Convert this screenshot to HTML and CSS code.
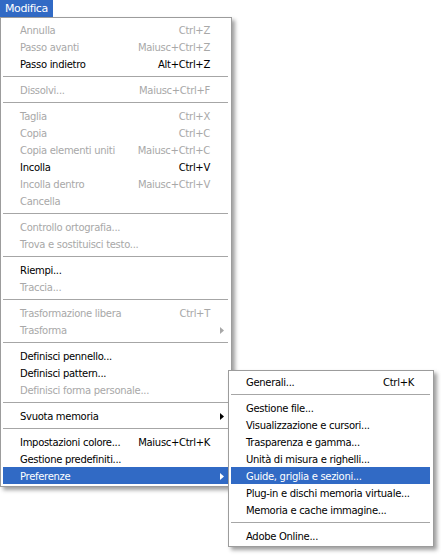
FILE: index.html
```html
<!DOCTYPE html>
<html lang="it">
<head>
<meta charset="utf-8">
<title>Modifica</title>
<link rel="stylesheet" href="styles.css">
</head>
<body>
<div class="screen">
  <div class="menubar-item">Modifica</div>
  <div class="menu main">
    <div class="item off"><span class="label">Annulla</span><span class="key">Ctrl+Z</span><span class="sub"></span></div>
    <div class="item off"><span class="label">Passo avanti</span><span class="key">Maiusc+Ctrl+Z</span><span class="sub"></span></div>
    <div class="item"><span class="label">Passo indietro</span><span class="key">Alt+Ctrl+Z</span><span class="sub"></span></div>
    <div class="sep"></div>
    <div class="item off"><span class="label">Dissolvi...</span><span class="key">Maiusc+Ctrl+F</span><span class="sub"></span></div>
    <div class="sep"></div>
    <div class="item off"><span class="label">Taglia</span><span class="key">Ctrl+X</span><span class="sub"></span></div>
    <div class="item off"><span class="label">Copia</span><span class="key">Ctrl+C</span><span class="sub"></span></div>
    <div class="item off"><span class="label">Copia elementi uniti</span><span class="key">Maiusc+Ctrl+C</span><span class="sub"></span></div>
    <div class="item"><span class="label">Incolla</span><span class="key">Ctrl+V</span><span class="sub"></span></div>
    <div class="item off"><span class="label">Incolla dentro</span><span class="key">Maiusc+Ctrl+V</span><span class="sub"></span></div>
    <div class="item off"><span class="label">Cancella</span><span class="key"></span><span class="sub"></span></div>
    <div class="sep"></div>
    <div class="item off"><span class="label">Controllo ortografia...</span><span class="key"></span><span class="sub"></span></div>
    <div class="item off"><span class="label">Trova e sostituisci testo...</span><span class="key"></span><span class="sub"></span></div>
    <div class="sep"></div>
    <div class="item"><span class="label">Riempi...</span><span class="key"></span><span class="sub"></span></div>
    <div class="item off"><span class="label">Traccia...</span><span class="key"></span><span class="sub"></span></div>
    <div class="sep"></div>
    <div class="item off"><span class="label">Trasformazione libera</span><span class="key">Ctrl+T</span><span class="sub"></span></div>
    <div class="item off"><span class="label">Trasforma</span><span class="key"></span><span class="sub"><svg class="arrow" width="4" height="7" viewBox="0 0 4 7"><path d="M0 0L4 3.5L0 7Z"/></svg></span></div>
    <div class="sep"></div>
    <div class="item"><span class="label">Definisci pennello...</span><span class="key"></span><span class="sub"></span></div>
    <div class="item"><span class="label">Definisci pattern...</span><span class="key"></span><span class="sub"></span></div>
    <div class="item off"><span class="label">Definisci forma personale...</span><span class="key"></span><span class="sub"></span></div>
    <div class="sep"></div>
    <div class="item"><span class="label">Svuota memoria</span><span class="key"></span><span class="sub"><svg class="arrow" width="4" height="7" viewBox="0 0 4 7"><path d="M0 0L4 3.5L0 7Z"/></svg></span></div>
    <div class="sep"></div>
    <div class="item"><span class="label">Impostazioni colore...</span><span class="key">Maiusc+Ctrl+K</span><span class="sub"></span></div>
    <div class="item"><span class="label">Gestione predefiniti...</span><span class="key"></span><span class="sub"></span></div>
    <div class="item hi"><span class="label">Preferenze</span><span class="key"></span><span class="sub"><svg class="arrow" width="4" height="7" viewBox="0 0 4 7"><path d="M0 0L4 3.5L0 7Z"/></svg></span></div>
  </div>
  <div class="menu submenu">
    <div class="item"><span class="label">Generali...</span><span class="key">Ctrl+K</span><span class="sub"></span></div>
    <div class="sep"></div>
    <div class="item"><span class="label">Gestione file...</span><span class="key"></span><span class="sub"></span></div>
    <div class="item"><span class="label">Visualizzazione e cursori...</span><span class="key"></span><span class="sub"></span></div>
    <div class="item"><span class="label">Trasparenza e gamma...</span><span class="key"></span><span class="sub"></span></div>
    <div class="item"><span class="label">Unità di misura e righelli...</span><span class="key"></span><span class="sub"></span></div>
    <div class="item hi"><span class="label">Guide, griglia e sezioni...</span><span class="key"></span><span class="sub"></span></div>
    <div class="item"><span class="label">Plug-in e dischi memoria virtuale...</span><span class="key"></span><span class="sub"></span></div>
    <div class="item"><span class="label">Memoria e cache immagine...</span><span class="key"></span><span class="sub"></span></div>
    <div class="sep"></div>
    <div class="item"><span class="label">Adobe Online...</span><span class="key"></span><span class="sub"></span></div>
  </div>
</div>
</body>
</html>
```

FILE: styles.css
```css
html, body {
  margin: 0;
  padding: 0;
  background: #ffffff;
}

body {
  font-family: "DejaVu Sans", Verdana, sans-serif;
  font-size: 10px;
  letter-spacing: -0.3px;
  color: #000000;
}

.screen {
  position: relative;
  width: 441px;
  height: 555px;
  overflow: hidden;
}

.menubar-item {
  width: 53px;
  height: 17px;
  box-sizing: border-box;
  padding-left: 5px;
  padding-top: 1px;
  line-height: 16px;
  background: #316ac5;
  color: #ffffff;
  font-size: 11px;
  letter-spacing: -0.4px;
}

.menu {
  background: #ffffff;
  border: 1px solid #9c9c9c;
  box-sizing: border-box;
  box-shadow: 3px 3px 4px rgba(0, 0, 0, 0.38);
  display: flex;
  flex-direction: column;
}

.main {
  width: 232px;
  padding: 3px 3px 2px 2px;
}

.submenu {
  position: absolute;
  left: 228px;
  top: 370px;
  width: 206px;
  padding: 2px 3px 2px 2px;
}

.item {
  display: flex;
  align-items: center;
  height: 17px;
  box-sizing: border-box;
  padding-left: 17px;
  padding-top: 1px;
  white-space: nowrap;
}

.submenu .item {
  padding-left: 15px;
}

.item .label {
  flex: 1;
}

.item .key {
  text-align: right;
}

.item .sub {
  width: 18px;
  height: 16px;
  display: flex;
  align-items: center;
  padding-left: 10px;
  box-sizing: border-box;
}

.submenu .item .sub {
  width: 16px;
}

.arrow {
  display: block;
  fill: #000000;
}

.off {
  color: #a8a8a8;
}

.off .arrow {
  fill: #a8a8a8;
}

.hi {
  background: #316ac5;
  color: #ffffff;
}

.hi .arrow {
  fill: #ffffff;
}

.sep {
  height: 9px;
  display: flex;
  align-items: center;
}

.sep::before {
  content: "";
  display: block;
  flex: 1;
  height: 1px;
  background: #a6a6a6;
}
```
